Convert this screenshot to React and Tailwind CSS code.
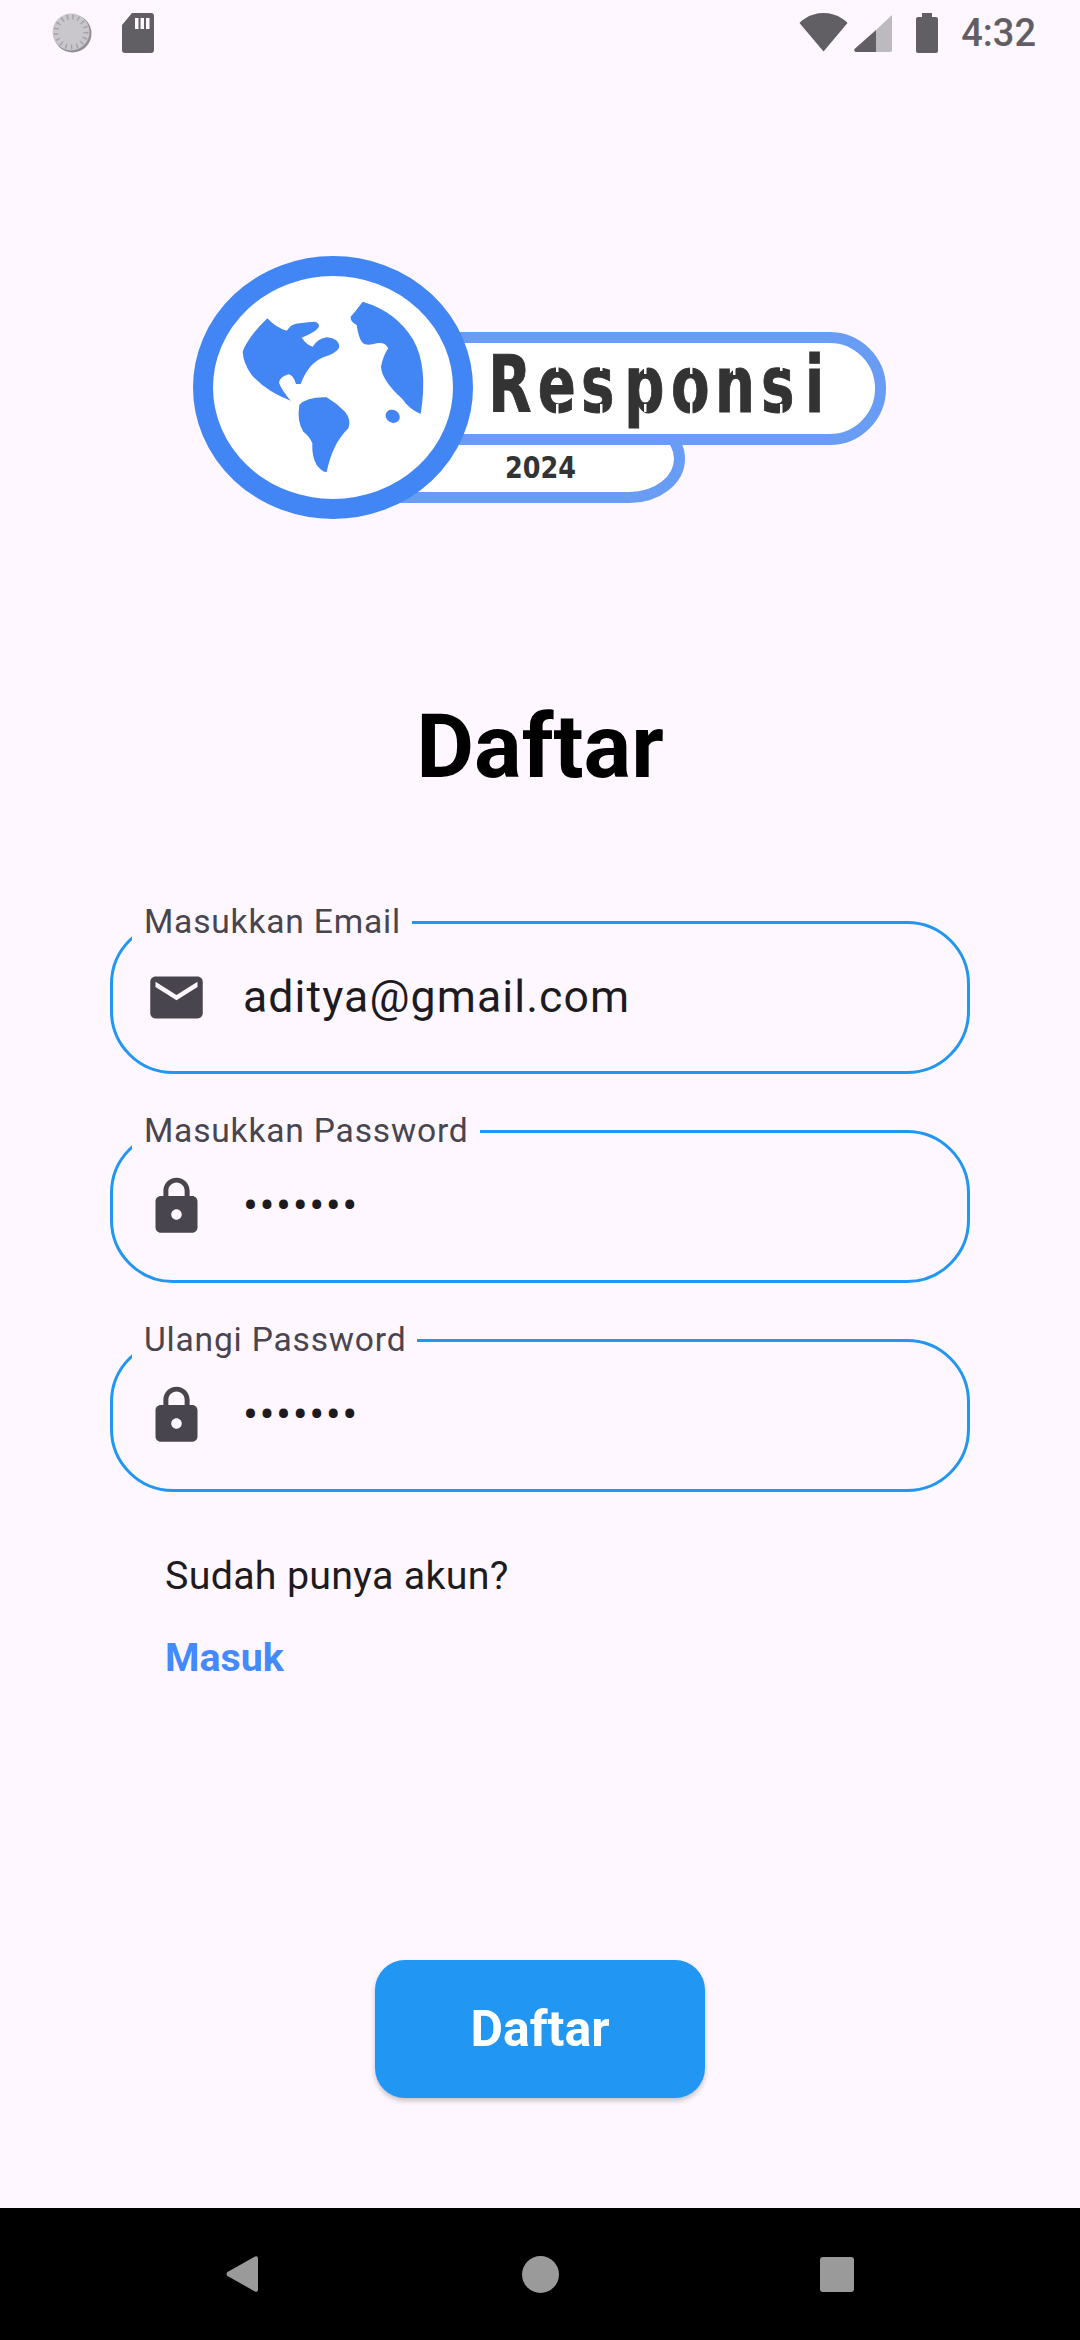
import React from "react";

const MAIL = "M20 4H4c-1.1 0-1.99.9-1.99 2L2 18c0 1.1.9 2 2 2h16c1.1 0 2-.9 2-2V6c0-1.1-.9-2-2-2zm0 4l-8 5-8-5V6l8 5 8-5v2z";
const LOCK = "M18 8h-1V6c0-2.76-2.24-5-5-5S7 3.24 7 6v2H6c-1.1 0-2 .9-2 2v10c0 1.1.9 2 2 2h12c1.1 0 2-.9 2-2V10c0-1.1-.9-2-2-2zm-6 9c-1.1 0-2-.9-2-2s.9-2 2-2 2 .9 2 2-.9 2-2 2zm3.1-9H8.9V6c0-1.71 1.39-3.1 3.1-3.1 1.71 0 3.1 1.39 3.1 3.1v2z";

// stencil gaps of the logo lettering: [x, y, height]
const CUTS = [
	[556, 362, 10], [556, 404, 10],
	[600, 362, 9], [600, 404, 10],
	[644, 362, 12], [644, 404, 8],
	[690, 362, 12], [690, 402, 12],
	[733, 362, 13],
	[780, 362, 9], [780, 404, 10],
];

const StatusBar = () => (
	<div className="h-[72px] flex items-start pt-[13px] pl-[52px] pr-[44px] text-[#625f64]">
		<svg viewBox="0 0 40 40" className="w-[40px] h-[40px]">
			<circle cx="20.500" cy="20.500" r="19" fill="#6f6c72" opacity="0.75" />
			<circle cx="19" cy="19" r="18.500" fill="#c9c6cc" />
			<circle cx="19" cy="19" r="15" fill="none" stroke="#a5a2a8" strokeWidth="5" strokeDasharray="1.500 4" />
		</svg>
		<svg viewBox="0 0 32 40" className="w-[32px] h-[40px] ml-[30px]">
			<path fillRule="evenodd" fill="currentColor" d="M10 0h19a3 3 0 0 1 3 3v34a3 3 0 0 1-3 3H3a3 3 0 0 1-3-3V12zM13 5v11h3.500V5zM18.500 5v11h3.500V5zM24 5v11h3.500V5z" />
		</svg>
		<div className="flex-1" />
		<svg viewBox="0 0 49 39" className="w-[49px] h-[39px]">
			<path fill="currentColor" d="M24.500 38.500L0.500 10Q2 8 6 5.500Q14 0 24.500 0Q35 0 43 5.500Q47 8 48.500 10z" />
		</svg>
		<svg viewBox="0 0 38 37" className="w-[38px] h-[37px] ml-[6px] mt-[2px]">
			<path fill="#bdbabf" d="M38 0V35a2 2 0 0 1-2 2H22V15z" />
			<path fill="currentColor" d="M22 15V37H2a2 2 0 0 1-1.500-3z" />
		</svg>
		<svg viewBox="0 0 22 40" className="w-[22px] h-[40px] ml-[24px]">
			<path fill="currentColor" d="M6 0h10v4h4a2 2 0 0 1 2 2v32a2 2 0 0 1-2 2H2a2 2 0 0 1-2-2V6a2 2 0 0 1 2-2h4z" />
		</svg>
		<span className="ml-[23px] mt-[-3px] text-[38px] leading-[46px] font-medium font-['Roboto',sans-serif]">4:32</span>
	</div>
);

const Logo = () => (
	<svg viewBox="170 230 760 320" className="w-[760px] h-[320px] ml-[170px] mt-[158px] shrink-0">
		<rect x="340" y="420" width="339.500" height="77.500" rx="50" fill="#fff" stroke="#699cf5" strokeWidth="11" />
		<rect x="400" y="337.500" width="480.500" height="102" rx="51" fill="#fff" stroke="#699cf5" strokeWidth="11" />
		<g transform="translate(0 412) scale(0.72 1)">
			<text
				x="678 747 807 867 932 993 1057 1118"
				y="0"
				fontFamily="'DejaVu Sans', sans-serif"
				fontWeight="700"
				fontSize="78"
				fill="#333333"
				stroke="#333333"
				strokeWidth="1"
			>
				Responsi
			</text>
		</g>
		{CUTS.map(([x, y, h]) => (
			<rect key={`${x}-${y}`} x={x} y={y} width="2.500" height={h} fill="#fff" />
		))}
		<text x="505" y="478" textLength="71" lengthAdjust="spacingAndGlyphs" fontFamily="'DejaVu Sans', sans-serif" fontWeight="700" fontSize="30" fill="#333333">2024</text>
		<ellipse cx="333" cy="387.500" rx="130" ry="121.500" fill="#fff" stroke="#4285f4" strokeWidth="20" />
		<g transform="translate(180 240) scale(0.33333)" fill="#4285f4">
			<path d="M262 235Q290 265 320 272Q335 250 360 250Q385 245 405 245Q420 250 416 262Q405 278 365 293Q380 315 398 320Q415 295 440 292Q478 295 478 322Q470 340 430 352Q385 370 362 432L348 432Q340 405 325 403Q300 410 297 428Q305 450 332 482Q260 455 215 405Q190 370 188 335Q205 290 262 235Z" />
			<path d="M548 185Q650 215 700 300Q745 380 722 522Q690 510 665 475Q605 420 603 380Q610 345 625 325Q615 305 590 310Q555 320 545 305Q535 290 530 255Q510 245 512 230Q530 210 548 185Z" />
			<path d="M358 495Q380 470 440 472Q470 490 495 515Q515 540 505 565Q480 590 465 620Q450 650 440 695Q430 700 410 675Q395 650 397 610Q390 590 370 575Q350 545 358 495Z" />
			<ellipse cx="638" cy="529" rx="22" ry="19" transform="rotate(30 638 529)" />
		</g>
	</svg>
);

const Field = ({label, icon, value, secret}) => (
	<div className="relative h-[153px] rounded-[63px] border-[3px] border-[#2196f3] flex items-center">
		<span className="absolute left-[19px] top-[-18px] h-[42px] bg-[#fef7ff] pl-[12px] pr-[11px] text-[33.600px] leading-[32px] tracking-[0.8px] text-[#49454f]">
			{label}
		</span>
		<svg viewBox="0 0 24 24" className="w-[63px] h-[63px] ml-[32px] shrink-0" fill="#49454f">
			<path d={icon} />
		</svg>
		<span className={secret ? "ml-[35px] text-[44.600px] tracking-[1.500px] text-[#1d1b20]" : "ml-[35px] text-[44.600px] tracking-[1.100px] text-[#1d1b20]"}>
			{value}
		</span>
	</div>
);

const NavBar = () => (
	<div className="h-[132px] bg-black flex items-center justify-center">
		<svg viewBox="0 0 32 36" className="w-[32px] h-[36px]">
			<path fill="#9a9a9a" d="M29 0.500Q32 -0.500 32 2.500V33.500Q32 36.500 29 35.500L1.500 20Q-0.500 18 1.500 16z" />
		</svg>
		<div className="w-[37px] h-[37px] ml-[264px] rounded-full bg-[#9a9a9a]" />
		<div className="w-[34px] h-[35px] ml-[261px] rounded-[3px] bg-[#9a9a9a]" />
	</div>
);

const App = () => {
	return (
		<div className="w-[1080px] h-[2340px] bg-[#fef7ff] flex flex-col font-['Roboto',sans-serif] overflow-hidden">
			<StatusBar />
			<Logo />
			<h1 className="mt-[147px] text-center text-[89px] leading-[100px] font-bold text-black">Daftar</h1>
			<div className="mt-[124px] mx-[110px] flex flex-col gap-[56px]">
				<Field label="Masukkan Email" icon={MAIL} value="aditya@gmail.com" />
				<Field label="Masukkan Password" icon={LOCK} value="•••••••" secret />
				<Field label="Ulangi Password" icon={LOCK} value="•••••••" secret />
			</div>
			<p className="mt-[60px] ml-[165px] text-[39.375px] leading-[48px] tracking-[0.3px] text-[#1d1b20]">Sudah punya akun?</p>
			<p className="mt-[34px] ml-[165px] text-[39.375px] leading-[48px] font-bold text-[#448aff]">Masuk</p>
			<div className="flex-1 flex justify-center items-start pt-[278px]">
				<button className="w-[330px] h-[138px] rounded-[30px] bg-[#2196f3] text-white text-[50px] font-bold shadow-[0_3px_5px_rgba(0,0,0,0.22)]">
					Daftar
				</button>
			</div>
			<NavBar />
		</div>
	);
};

export default App;
